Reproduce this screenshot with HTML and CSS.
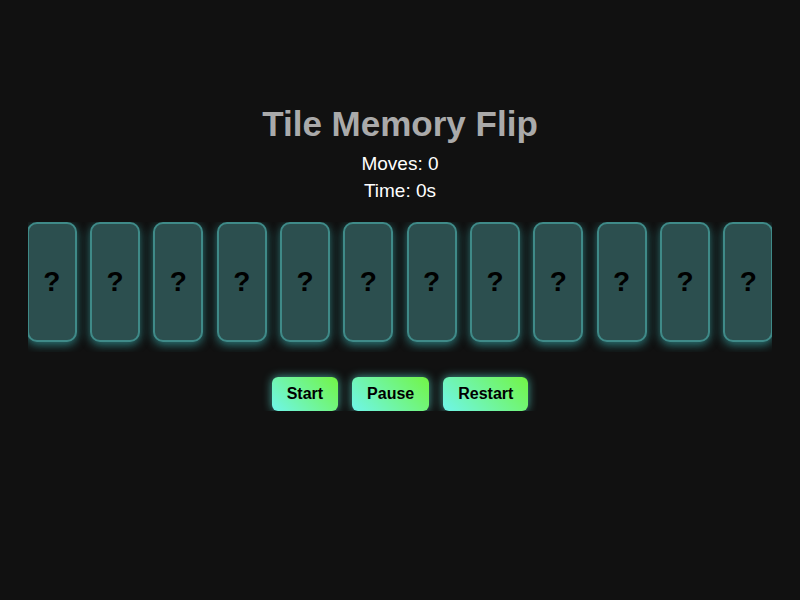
FILE: index.html
```html
<!DOCTYPE html>
<html>
<head>
<meta charset="utf-8">
<title>Tile Memory Flip</title>
<link rel="stylesheet" href="styles.css">
</head>
<body>
<main class="game">
  <h1 class="title">Tile Memory Flip</h1>
  <div class="stats">
    <p class="stat">Moves: 0</p>
    <p class="stat">Time: 0s</p>
  </div>
  <div class="board">
    <div class="tiles">
      <div class="tile">?</div>
      <div class="tile">?</div>
      <div class="tile">?</div>
      <div class="tile">?</div>
      <div class="tile">?</div>
      <div class="tile">?</div>
      <div class="tile">?</div>
      <div class="tile">?</div>
      <div class="tile">?</div>
      <div class="tile">?</div>
      <div class="tile">?</div>
      <div class="tile">?</div>
    </div>
  </div>
  <div class="controls">
    <button class="btn">Start</button>
    <button class="btn">Pause</button>
    <button class="btn">Restart</button>
  </div>
</main>
</body>
</html>
```
FILE: styles.css
```css
html, body {
  margin: 0;
  padding: 0;
  background: #111111;
  font-family: "Liberation Sans", Arial, sans-serif;
}
.game {
  padding-top: 103px;
  display: flex;
  flex-direction: column;
  align-items: center;
}
.title {
  margin: 0;
  font-size: 35px;
  line-height: 41px;
  font-weight: bold;
  color: #aaaaaa;
}
.stats {
  margin-top: 6px;
  display: flex;
  flex-direction: column;
  align-items: center;
}
.stat {
  margin: 0;
  font-size: 19px;
  line-height: 27px;
  color: #ffffff;
}
.board {
  margin-top: 18px;
  align-self: stretch;
  margin-left: 28px;
  margin-right: 28px;
  overflow: hidden;
  padding-bottom: 10px;
}
.tiles {
  display: flex;
  justify-content: center;
  gap: 13.33px;
}
.tile {
  flex: 0 0 50px;
  width: 50px;
  height: 120px;
  box-sizing: border-box;
  border: 2px solid #3f8a88;
  border-radius: 10px;
  background: #2c4f4f;
  box-shadow: 0 3px 10px rgba(64, 200, 200, 0.55);
  display: flex;
  align-items: center;
  justify-content: center;
  font-size: 28px;
  font-weight: bold;
  color: #000000;
}
.controls {
  margin-top: 25px;
  display: flex;
  gap: 14px;
}
.btn {
  height: 34px;
  padding: 0 15px;
  border: none;
  border-radius: 6px;
  background: linear-gradient(45deg, #6ff5ea, #72f545);
  box-shadow: 0 0 10px rgba(100, 255, 240, 0.6);
  font-family: "Liberation Sans", Arial, sans-serif;
  font-size: 16px;
  font-weight: bold;
  color: #000000;
}
```
